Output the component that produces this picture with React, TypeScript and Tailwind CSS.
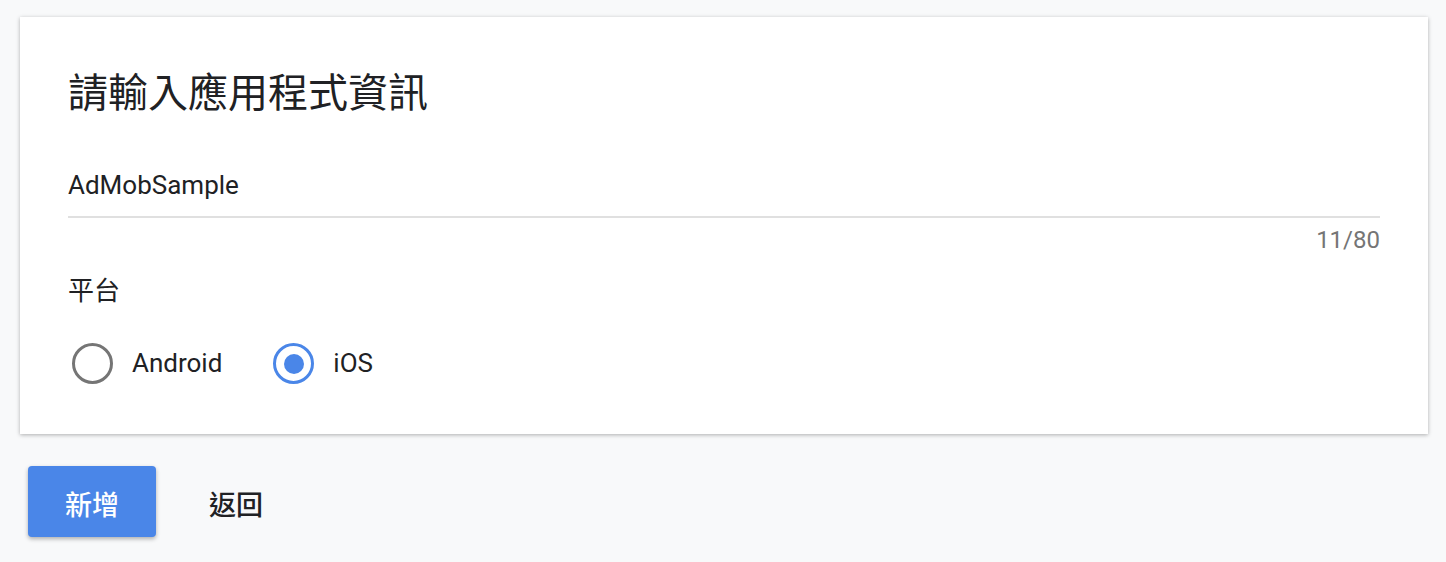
import React, { useState } from "react";

const FONT = "font-['Roboto','Noto_Sans_CJK_TC',sans-serif]";

const Radio: React.FC<{
  label: string;
  checked: boolean;
  onSelect: () => void;
}> = ({ label, checked, onSelect }) => (
  <button
    type="button"
    onClick={onSelect}
    className="flex items-center gap-[19px] cursor-pointer"
  >
    <span
      className={
        checked
          ? "w-[41px] h-[41px] rounded-full border-[3px] border-[#4a86e8] flex items-center justify-center"
          : "w-[41px] h-[41px] rounded-full border-[3px] border-[#757575] flex items-center justify-center"
      }
    >
      {checked && (
        <span className="w-[20px] h-[20px] rounded-full bg-[#4a86e8]" />
      )}
    </span>
    <span className="text-[26px] text-[#202124]">{label}</span>
  </button>
);

const App: React.FC = () => {
  const [platform, setPlatform] = useState("ios");
  const [name, setName] = useState("AdMobSample");

  return (
    <div
      className={`${FONT} w-[1446px] h-[562px] bg-[#f8f9fa] pt-[17px] pl-[20px] overflow-hidden`}
    >
      <div className="w-[1408px] h-[417px] bg-white shadow-[0_1px_4px_rgba(0,0,0,0.3)] px-[48px] pt-[68px]">
        <h1 className="text-[40px] leading-[58px] -mt-[20px] text-[#202124] font-normal">
          請輸入應用程式資訊
        </h1>

        <div className="mt-[45px]">
          <input
            value={name}
            onChange={(e) => setName(e.target.value)}
            maxLength={80}
            className="w-full text-[26px] leading-[34px] text-[#202124] outline-none border-b-2 border-[#e0e0e0] pb-[14px]"
          />
          <div className="text-right text-[24px] leading-[28px] text-[#757575] mt-[8px]">
            {name.length}/80
          </div>
        </div>

        <div className="text-[26px] leading-[34px] text-[#202124] mt-[20px]">
          平台
        </div>

        <div className="flex items-center gap-[51px] mt-[35px] pl-[4px]">
          <Radio
            label="Android"
            checked={platform === "android"}
            onSelect={() => setPlatform("android")}
          />
          <Radio
            label="iOS"
            checked={platform === "ios"}
            onSelect={() => setPlatform("ios")}
          />
        </div>
      </div>

      <div className="flex items-center mt-[32px] pl-[8px]">
        <button className="w-[128px] h-[71px] pt-[10px] rounded-[4px] bg-[#4a86e8] text-white text-[27px] font-medium shadow-[0_2px_4px_rgba(0,0,0,0.3)]">
          新增
        </button>
        <button className="ml-[53px] h-[71px] pt-[10px] text-[27px] font-medium text-[#202124]">
          返回
        </button>
      </div>
    </div>
  );
};

export default App;
